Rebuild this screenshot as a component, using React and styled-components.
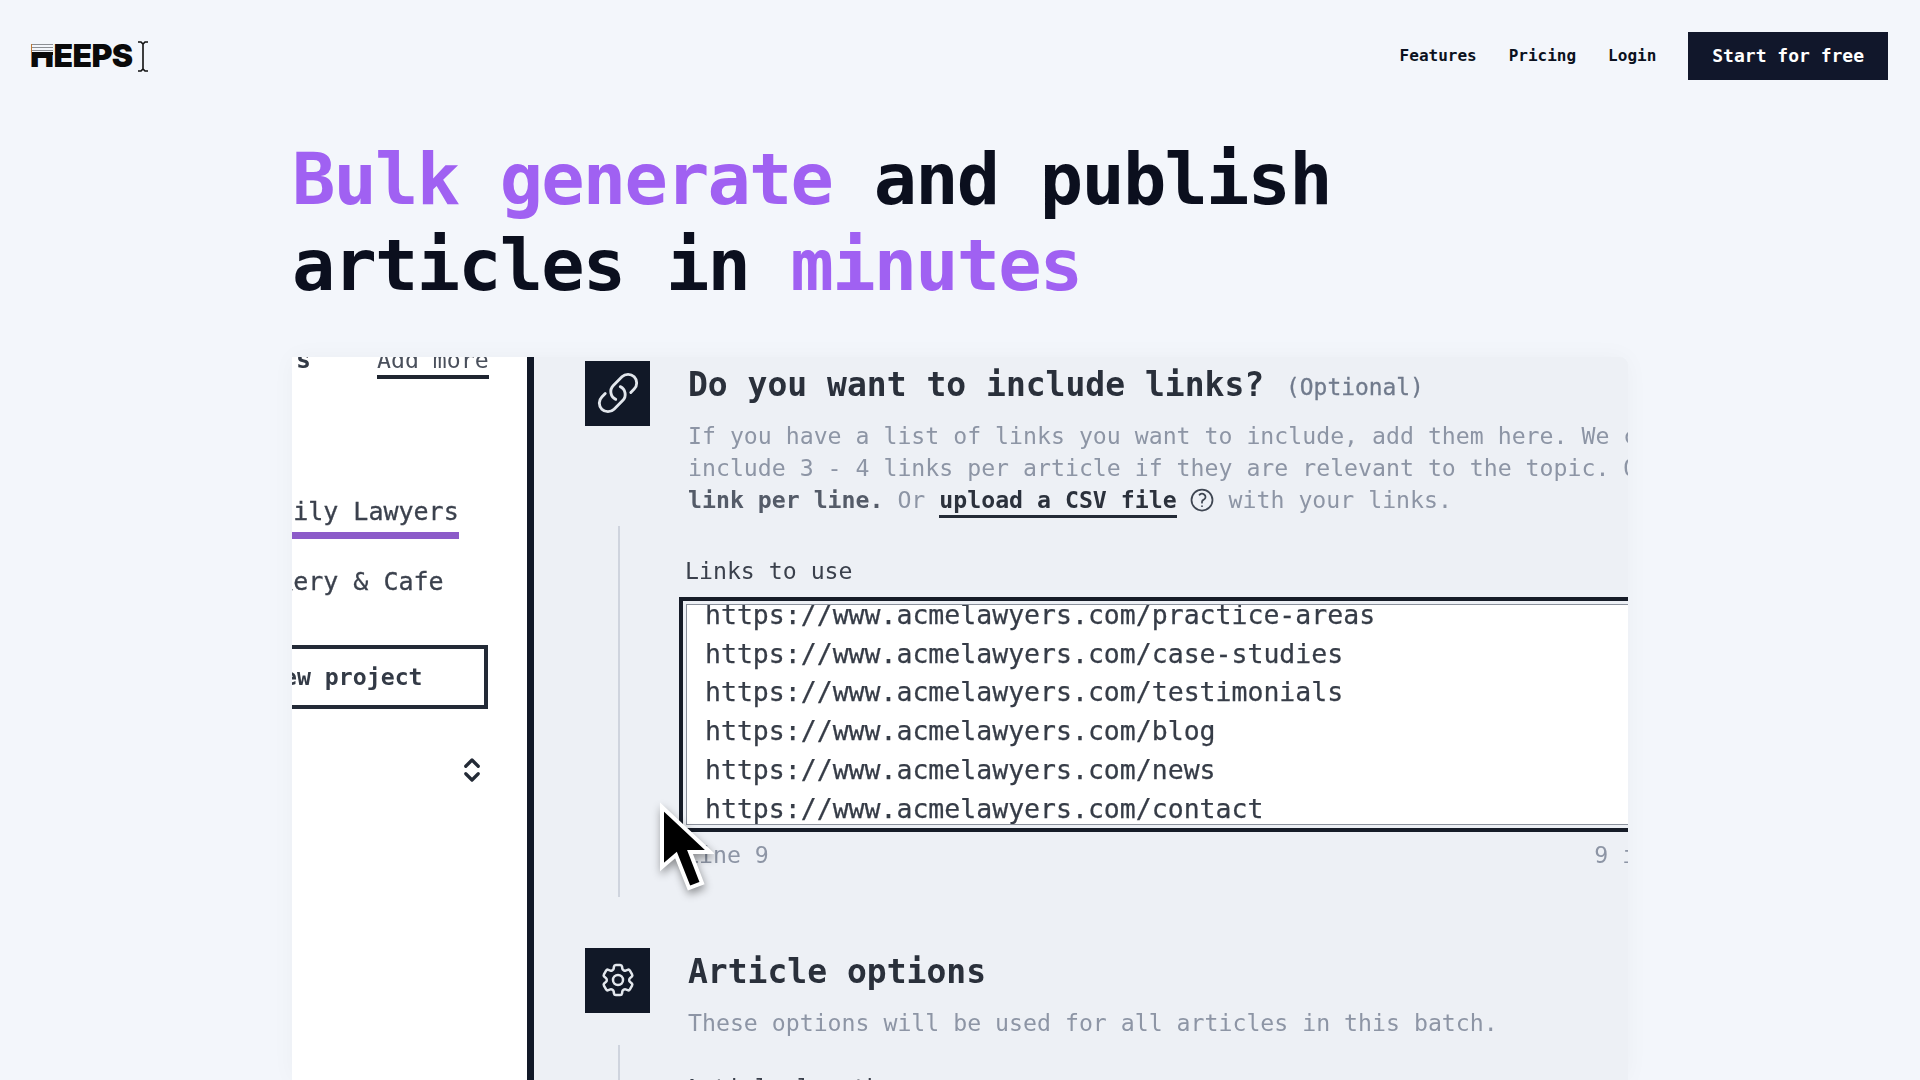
import React from 'react'
import styled, { createGlobalStyle } from 'styled-components'
import { HiOutlineLink, HiOutlineCog6Tooth, HiOutlineQuestionMarkCircle } from 'react-icons/hi2'
import { LuChevronsUpDown } from 'react-icons/lu'

const Global = createGlobalStyle`
  html, body {
    margin: 0;
    height: 1080px;
    overflow: hidden;
    background: #f3f6fb;
  }
  * { box-sizing: border-box; }
  body { font-family: "DejaVu Sans Mono", monospace; color: #0b1120; }
`

const Page = styled.div`
  position: relative;
  height: 1080px;
  overflow: hidden;
`
const Nav = styled.nav`
  display: flex;
  justify-content: space-between;
  align-items: center;
  padding: 32px 32px 0;
`
const Logo = styled.div`
  position: relative;
  display: flex;
  align-items: center;
  gap: 4px;
`
const LogoText = styled.span`
  font-family: Inter, sans-serif;
  font-weight: 900;
  font-size: 32px;
  line-height: 32px;
  letter-spacing: -0.6px;
  color: #0a0a0a;
  margin-left: -2px;
`
const LogoStripes = styled.span`
  position: absolute;
  left: 0;
  top: 4px;
  width: 21px;
  height: 11px;
  background:
    linear-gradient(transparent 8px, #0a0a0a 8px),
    repeating-linear-gradient(#8c8f94 0 1px, #f3f6fb 1px 3px);
`
const NavLinks = styled.div`
  display: flex;
  align-items: center;
  gap: 32px;
`
const NavLink = styled.a`
  font-size: 16px;
  font-weight: 700;
  color: #0b1120;
  padding-bottom: 2px;
`
const StartButton = styled.a`
  background: #11172b;
  color: #fff;
  font-size: 18px;
  font-weight: 700;
  line-height: 47px;
  height: 48px;
  padding: 0 24px;
`
const Hero = styled.div`
  width: 1336px;
  margin: 56px auto 0;
`
const Title = styled.h1`
  margin: 0;
  font-size: 72px;
  font-weight: 700;
  line-height: 86.4px;
  letter-spacing: -1.8px;
  color: #0b0f1e;
`
const Accent = styled.span`
  color: #a061f2;
`
const Shot = styled.div`
  display: flex;
  height: 723px;
  margin-top: 48px;
  overflow: hidden;
  background: #edf0f5;
  border-top-right-radius: 8px;
  box-shadow: 0 0 24px rgba(30, 41, 59, 0.035);
  font-size: 23.2px;
  filter: blur(0.55px);
`
const Sidebar = styled.aside`
  flex: 0 0 242px;
  background: #fff;
  border-right: 7px solid #111827;
  overflow: hidden;
  position: relative;
`
const SideTop = styled.div`
  display: flex;
  justify-content: flex-end;
  gap: 63px;
  width: 197px;
  margin-top: -13px;
  white-space: nowrap;
  line-height: 32px;
`
const SideTitle = styled.span`
  font-size: 24.8px;
  font-weight: 700;
  letter-spacing: 3px;
  color: #333a46;
`
const AddMore = styled.span`
  flex: none;
  width: 112px;
  height: 35px;
  color: #4a505c;
  border-bottom: 4px solid #1f2530;
`
const ProjectList = styled.div`
  display: flex;
  flex-direction: column;
  margin: 0 0 0 -44px;
  padding-top: 117px;
  width: 240px;
`
const Project = styled.div`
  font-size: 25px;
  line-height: 32px;
  white-space: nowrap;
  color: #3b414d;
  -webkit-text-stroke: 0.3px #3b414d;
  width: ${p => (p.$active ? '211px' : 'auto')};
  height: ${p => (p.$active ? '43px' : 'auto')};
  margin-bottom: ${p => (p.$active ? '27px' : '0')};
  border-bottom: ${p => (p.$active ? '7px solid #8c5bc9' : 'none')};
`
const NewProject = styled.div`
  width: 240px;
  height: 64px;
  margin-top: 47px;
  padding-left: 17px;
  border: 4px solid #232a36;
  font-weight: 700;
  line-height: 56px;
  color: #333a46;
  white-space: nowrap;
`
const Chevrons = styled.div`
  display: flex;
  justify-content: flex-end;
  margin: 46px 0 0;
  padding-right: 1px;
  font-size: 30px;
  color: #232a36;
  line-height: 0;
`
const Main = styled.main`
  flex: 1;
  min-width: 0;
  padding: 4px 0 0 51px;
  overflow: hidden;
  white-space: nowrap;
`
const SectionHead = styled.div`
  display: flex;
  gap: 38px;
`
const Tile = styled.div`
  flex: 0 0 65px;
  height: 65px;
  display: flex;
  align-items: center;
  justify-content: center;
  background: #111827;
  color: #e2e6ec;
  font-size: ${p => p.$size}px;
`
const SectionTitle = styled.h2`
  margin: 0;
  padding-top: 2px;
  font-size: 33px;
  line-height: 44px;
  font-weight: 700;
  color: #2a303b;
`
const Optional = styled.span`
  margin-left: 2px;
  font-size: 22.9px;
  line-height: 1;
  font-weight: 400;
  color: #707a8c;
  -webkit-text-stroke: 0.3px #707a8c;
  vertical-align: 1px;
`
const Desc = styled.p`
  margin: 13px 0 0;
  line-height: 32.3px;
  color: #8d95a5;
`
const Strong = styled.b`
  color: #545b68;
`
const UploadLink = styled.b`
  color: #2b313c;
  padding-bottom: 2px;
  border-bottom: 3px solid #232a36;
`
const HelpIcon = styled.span`
  display: inline-block;
  width: 27px;
  height: 24px;
  margin: 0 0 0 11px;
  font-size: 28px;
  line-height: 24px;
  color: #3f4652;
  vertical-align: -6px;
`
const Rail = styled.div`
  margin: 9px 0 0 33px;
  padding: 29px 0 0 65px;
  height: 371px;
  border-left: 2px solid #cfd4de;
`
const Rail2 = styled.div`
  margin: 6px 0 0 33px;
  padding: 27px 0 0 65px;
  height: 80px;
  border-left: 2px solid #cfd4de;
`
const Label = styled.div`
  line-height: 32px;
  color: #3a404c;
`
const LinkBox = styled.div`
  width: 1021px;
  height: 235px;
  margin: 10px 0 0 -6px;
  padding: 3px;
  background: #edf0f5;
  border: 4px solid #161c28;
`
const LinkList = styled.div`
  height: 100%;
  overflow: hidden;
  background: #fff;
  border: 1.5px solid #8b919c;
  padding-left: 18px;
`
const LinkRow = styled.div`
  font-size: 26.5px;
  line-height: 38.8px;
  color: #363c47;
  -webkit-text-stroke: 0.25px #363c47;
  position: relative;
  top: -9px;
`
const BoxFoot = styled.div`
  display: flex;
  justify-content: space-between;
  width: 1007px;
  margin-top: 7px;
  line-height: 32px;
  color: #8d95a5;
`
const Section2 = styled.section`
  margin-top: 51px;
`
const Pointer = styled.svg`
  position: absolute;
  left: 652px;
  top: 800px;
  filter: drop-shadow(1px 4px 4px rgba(0, 0, 0, 0.4));
`

const links = ['practice-areas', 'case-studies', 'testimonials', 'blog', 'news', 'contact']

export default function App() {
  return (
    <Page>
      <Global />
      <Nav>
        <Logo>
          <LogoText>HEEPS</LogoText>
          <LogoStripes />
          <svg width="12" height="31" viewBox="0 0 12 31" fill="none" stroke="#111" strokeWidth="1.6">
            <path d="M1 1h3l2 2 2-2h3M6 3v25M1 30h3l2-2 2 2h3" />
          </svg>
        </Logo>
        <NavLinks>
          <NavLink>Features</NavLink>
          <NavLink>Pricing</NavLink>
          <NavLink>Login</NavLink>
          <StartButton>Start for free</StartButton>
        </NavLinks>
      </Nav>
      <Hero>
        <Title>
          <Accent>Bulk generate</Accent> and publish<br />
          articles in <Accent>minutes</Accent>
        </Title>
        <Shot>
          <Sidebar>
            <SideTop>
              <SideTitle>Projects</SideTitle>
              <AddMore>Add more</AddMore>
            </SideTop>
            <ProjectList>
              <Project $active>Family Lawyers</Project>
              <Project>Bakery &amp; Cafe</Project>
              <NewProject>New project</NewProject>
              <Chevrons><LuChevronsUpDown strokeWidth={2.6} /></Chevrons>
            </ProjectList>
          </Sidebar>
          <Main>
            <section>
              <SectionHead>
                <Tile $size={46}><HiOutlineLink /></Tile>
                <div>
                  <SectionTitle>Do you want to include links? <Optional>(Optional)</Optional></SectionTitle>
                  <Desc>
                    If you have a list of links you want to include, add them here. We can<br />
                    include 3 - 4 links per article if they are relevant to the topic. One<br />
                    <Strong>link per line.</Strong> Or <UploadLink>upload a CSV file</UploadLink>
                    <HelpIcon><HiOutlineQuestionMarkCircle /></HelpIcon> with your links.
                  </Desc>
                </div>
              </SectionHead>
              <Rail>
                <Label>Links to use</Label>
                <LinkBox>
                  <LinkList>
                    {links.map(l => (
                      <LinkRow key={l}>https://www.acmelawyers.com/{l}</LinkRow>
                    ))}
                  </LinkList>
                </LinkBox>
                <BoxFoot>
                  <span>Line 9</span>
                  <span>9 items</span>
                </BoxFoot>
              </Rail>
            </section>
            <Section2>
              <SectionHead>
                <Tile $size={40}><HiOutlineCog6Tooth /></Tile>
                <div>
                  <SectionTitle>Article options</SectionTitle>
                  <Desc>These options will be used for all articles in this batch.</Desc>
                </div>
              </SectionHead>
              <Rail2>
                <Label>Article length</Label>
              </Rail2>
            </Section2>
          </Main>
        </Shot>
      </Hero>
      <Pointer width="62" height="100" viewBox="0 0 62 100">
        <path
          d="M10 7v60l14-12 13 33 13-5-12-31h20z"
          fill="#000"
          stroke="#fff"
          strokeWidth="4"
          strokeLinejoin="miter"
        />
      </Pointer>
    </Page>
  )
}
